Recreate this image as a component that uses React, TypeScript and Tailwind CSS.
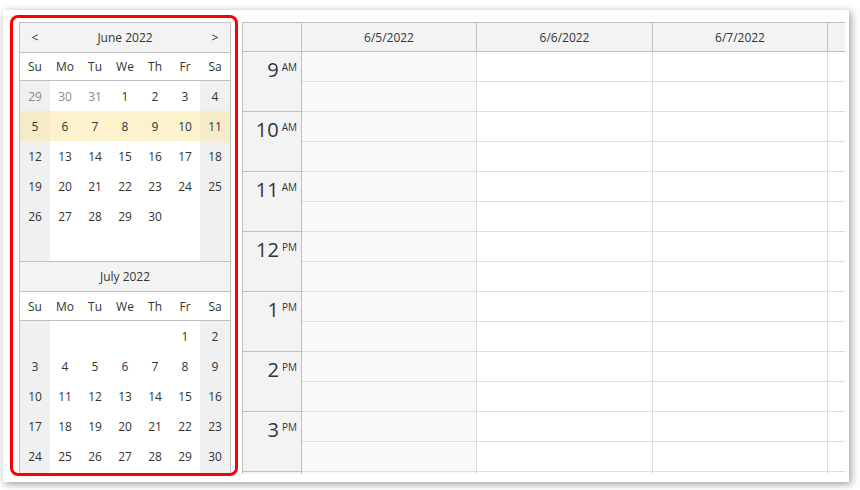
import React from "react";

type Cell = { d: string; other?: boolean } | null;

const juneWeeks: Cell[][] = [
  [{ d: "29", other: true }, { d: "30", other: true }, { d: "31", other: true }, { d: "1" }, { d: "2" }, { d: "3" }, { d: "4" }],
  [{ d: "5" }, { d: "6" }, { d: "7" }, { d: "8" }, { d: "9" }, { d: "10" }, { d: "11" }],
  [{ d: "12" }, { d: "13" }, { d: "14" }, { d: "15" }, { d: "16" }, { d: "17" }, { d: "18" }],
  [{ d: "19" }, { d: "20" }, { d: "21" }, { d: "22" }, { d: "23" }, { d: "24" }, { d: "25" }],
  [{ d: "26" }, { d: "27" }, { d: "28" }, { d: "29" }, { d: "30" }, null, null],
  [null, null, null, null, null, null, null],
];

const julyWeeks: Cell[][] = [
  [null, null, null, null, null, { d: "1" }, { d: "2" }],
  [{ d: "3" }, { d: "4" }, { d: "5" }, { d: "6" }, { d: "7" }, { d: "8" }, { d: "9" }],
  [{ d: "10" }, { d: "11" }, { d: "12" }, { d: "13" }, { d: "14" }, { d: "15" }, { d: "16" }],
  [{ d: "17" }, { d: "18" }, { d: "19" }, { d: "20" }, { d: "21" }, { d: "22" }, { d: "23" }],
  [{ d: "24" }, { d: "25" }, { d: "26" }, { d: "27" }, { d: "28" }, { d: "29" }, { d: "30" }],
  [null, null, null, null, null, null, null],
];

const dayNames = ["Su", "Mo", "Tu", "We", "Th", "Fr", "Sa"];

function Weeks({ weeks, highlight }: { weeks: Cell[][]; highlight?: number }) {
  return (
    <div>
      {weeks.map((w, wi) => (
        <div key={wi} className="flex h-[30px]">
          {w.map((c, ci) => {
            const weekend = ci === 0 || ci === 6;
            const hl = wi === highlight;
            let bg = weekend ? "bg-[#f0f0f0]" : "bg-white";
            if (hl) bg = weekend ? "bg-[#f5ebc8]" : "bg-[#fcf2cc]";
            return (
              <div
                key={ci}
                className={`flex w-[30px] items-center justify-center pt-[1px] ${bg} ${c && c.other ? "text-[#8a8a8a]" : "text-[#333]"}`}
              >
                {c ? c.d : ""}
              </div>
            );
          })}
        </div>
      ))}
    </div>
  );
}

function DayNames({ h }: { h: string }) {
  return (
    <div className={`flex ${h} items-center border-b border-[#c0c0c0] bg-white pt-[1px]`}>
      {dayNames.map((n) => (
        <div key={n} className="w-[30px] text-center text-[#333]">
          {n}
        </div>
      ))}
    </div>
  );
}

function Navigator() {
  return (
    <div className="h-[451px] w-[212px] overflow-hidden border-x border-t border-[#c0c0c0] text-[12px]">
      <div className="flex h-[30px] items-center border-b border-[#c0c0c0] bg-[#f3f3f3] pt-[1px] text-[#333]">
        <div className="w-[30px] text-center">&lt;</div>
        <div className="flex-1 text-center">June 2022</div>
        <div className="w-[30px] text-center">&gt;</div>
      </div>
      <DayNames h="h-[28px]" />
      <Weeks weeks={juneWeeks} highlight={1} />
      <div className="flex h-[31px] items-center justify-center border-y border-[#c0c0c0] bg-[#f3f3f3] pt-[1px] text-[#333]">
        July 2022
      </div>
      <DayNames h="h-[29px]" />
      <Weeks weeks={julyWeeks} />
    </div>
  );
}

const hours: [string, string][] = [
  ["9", "AM"],
  ["10", "AM"],
  ["11", "AM"],
  ["12", "PM"],
  ["1", "PM"],
  ["2", "PM"],
  ["3", "PM"],
];

function DayColumn({ w, bg, last }: { w: string; bg: string; last?: boolean }) {
  return (
    <div className={`${w} ${bg} ${last ? "" : "border-r border-[#dddddd]"} shrink-0`}>
      {Array.from({ length: 15 }).map((_, i) => (
        <div key={i} className="h-[30px] border-b border-[#dddddd]" />
      ))}
    </div>
  );
}

function Scheduler() {
  return (
    <div className="mt-[7px] h-[452px] w-[603px] overflow-hidden border-l border-t border-[#c0c0c0] text-[#333]">
      <div className="flex h-[29px] border-b border-[#c0c0c0] bg-[#f3f3f3] text-[12px]">
        <div className="w-[59px] shrink-0 border-r border-[#c0c0c0]" />
        <div className="flex w-[175px] shrink-0 items-center justify-center border-r border-[#c0c0c0] pt-[1px]">6/5/2022</div>
        <div className="flex w-[176px] shrink-0 items-center justify-center border-r border-[#c0c0c0] pt-[1px]">6/6/2022</div>
        <div className="flex w-[175px] shrink-0 items-center justify-center border-r border-[#c0c0c0] pt-[1px]">6/7/2022</div>
        <div className="w-[17px] shrink-0" />
      </div>
      <div className="flex">
        <div className="w-[59px] shrink-0 border-r border-[#c0c0c0] bg-[#f3f3f3]">
          {hours.map(([h, m]) => (
            <div key={h + m} className="flex h-[60px] items-start justify-end border-b border-[#c0c0c0] pr-[4px] pt-[8px]">
              <span className="text-[20px] leading-none">{h}</span>
              <span className="ml-[3px] mt-[2px] text-[10px] leading-none">{m}</span>
            </div>
          ))}
          <div className="h-[30px]" />
        </div>
        <DayColumn w="w-[175px]" bg="bg-[#f9f9f9]" />
        <DayColumn w="w-[176px]" bg="bg-white" />
        <DayColumn w="w-[175px]" bg="bg-white" />
        <DayColumn w="w-[17px]" bg="bg-white" last />
      </div>
    </div>
  );
}

export default function App() {
  return (
    <div className="h-[490px] w-[860px] overflow-hidden bg-white font-['Open_Sans',sans-serif]">
      <div className="ml-[3px] mt-[10px] flex h-[472px] w-[846px] items-start bg-white pl-[7px] pt-[5px] shadow-[2px_2px_8px_rgba(0,0,0,0.4)]">
        <div className="h-[461px] rounded-[8px] border-[3px] border-[#ff0000] pl-[6px] pr-[4px] pt-[4px]">
          <Navigator />
        </div>
        <div className="ml-[4px]">
          <Scheduler />
        </div>
      </div>
    </div>
  );
}
